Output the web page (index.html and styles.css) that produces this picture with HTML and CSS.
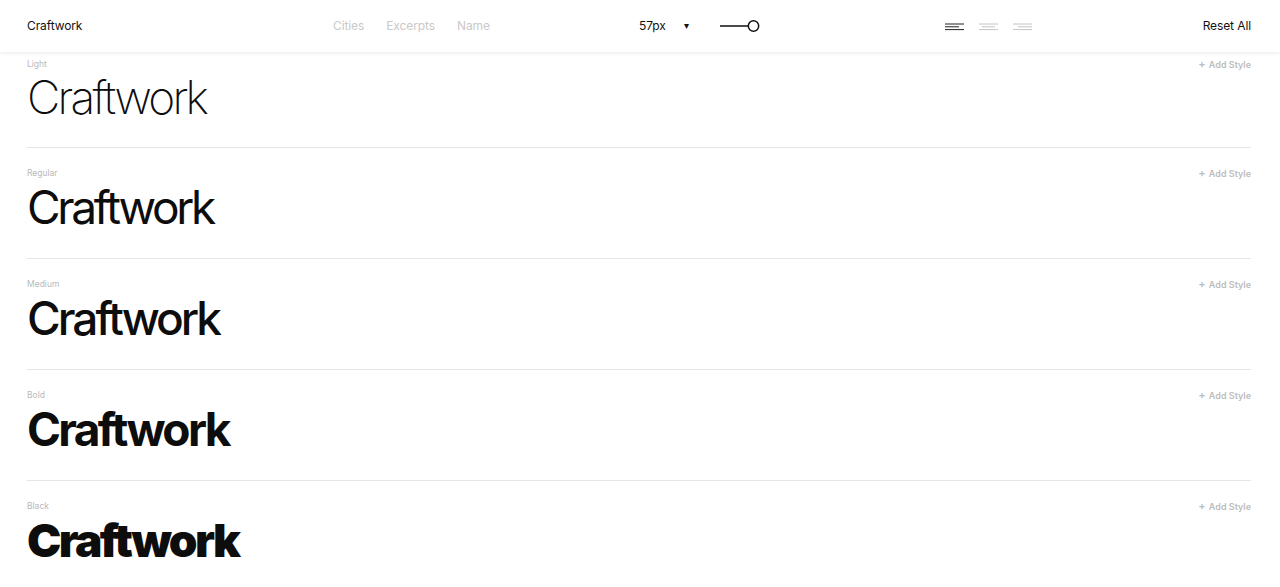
FILE: index.html
```html
<!DOCTYPE html>
<html lang="en">
<head>
  <meta charset="UTF-8" />
  <meta name="viewport" content="width=device-width, initial-scale=1.0"/>
  <title>Craftwork</title>
  <link rel="stylesheet" href="styles.css">
</head>
<body>

<header class="toolbar">
  <div class="brand">Craftwork</div>

  <nav class="samples">
    <a href="#">Cities</a>
    <a href="#">Excerpts</a>
    <a href="#">Name</a>
  </nav>

  <div class="size">
    <span class="size-value">57px</span>
    <span class="caret">&#9662;</span>
  </div>

  <div class="slider">
    <svg width="42" height="14" viewBox="0 0 42 14">
      <line x1="1" y1="7" x2="29" y2="7" stroke="#111" stroke-width="1.5"/>
      <circle cx="34.5" cy="7" r="5.2" fill="#fff" stroke="#111" stroke-width="1.5"/>
    </svg>
  </div>

  <div class="align">
    <svg width="19" height="8" viewBox="0 0 19 8">
      <g stroke="#222" stroke-width="1">
        <line x1="0" y1="1" x2="19" y2="1"/>
        <line x1="0" y1="3.8" x2="14" y2="3.8"/>
        <line x1="0" y1="6.6" x2="19" y2="6.6"/>
      </g>
    </svg>
    <svg width="19" height="8" viewBox="0 0 19 8">
      <g stroke="#c4c4c4" stroke-width="1">
        <line x1="0" y1="1" x2="19" y2="1"/>
        <line x1="3" y1="3.8" x2="16" y2="3.8"/>
        <line x1="0" y1="6.6" x2="19" y2="6.6"/>
      </g>
    </svg>
    <svg width="19" height="8" viewBox="0 0 19 8">
      <g stroke="#c4c4c4" stroke-width="1">
        <line x1="0" y1="1" x2="19" y2="1"/>
        <line x1="5" y1="3.8" x2="19" y2="3.8"/>
        <line x1="0" y1="6.6" x2="19" y2="6.6"/>
      </g>
    </svg>
  </div>

  <a class="reset" href="#">Reset All</a>
</header>

<main class="styles">
  <section class="style-row">
    <div class="row-head">
      <span class="label">Light</span>
      <a class="add" href="#"><span class="plus">+</span> Add Style</a>
    </div>
    <div class="sample w-light">Craftwork</div>
  </section>

  <section class="style-row">
    <div class="row-head">
      <span class="label">Regular</span>
      <a class="add" href="#"><span class="plus">+</span> Add Style</a>
    </div>
    <div class="sample w-regular">Craftwork</div>
  </section>

  <section class="style-row">
    <div class="row-head">
      <span class="label">Medium</span>
      <a class="add" href="#"><span class="plus">+</span> Add Style</a>
    </div>
    <div class="sample w-medium">Craftwork</div>
  </section>

  <section class="style-row">
    <div class="row-head">
      <span class="label">Bold</span>
      <a class="add" href="#"><span class="plus">+</span> Add Style</a>
    </div>
    <div class="sample w-bold">Craftwork</div>
  </section>

  <section class="style-row">
    <div class="row-head">
      <span class="label">Black</span>
      <a class="add" href="#"><span class="plus">+</span> Add Style</a>
    </div>
    <div class="sample w-black">Craftwork</div>
  </section>
</main>

</body>
</html>
```

FILE: styles.css
```css
* {
  box-sizing: border-box;
}

body {
  margin: 0;
  padding: 0;
  background: #fff;
  color: #111;
  font-family: Inter, 'Liberation Sans', sans-serif;
  height: 100vh;
  overflow: hidden;
}

a {
  color: inherit;
  text-decoration: none;
}

.toolbar {
  position: relative;
  z-index: 2;
  height: 52px;
  display: flex;
  align-items: center;
  padding: 0 29px 2px 27px;
  background: #fff;
  box-shadow: 0 1px 4px rgba(0, 0, 0, 0.09);
  font-size: 12px;
  letter-spacing: -0.1px;
}

.brand {
  width: 306px;
  color: #111;
}

.samples {
  display: flex;
  gap: 22px;
  width: 306px;
}

.samples a {
  color: #c9c9c9;
}

.size {
  display: flex;
  align-items: center;
  width: 80px;
}

.size-value {
  width: 45px;
}

.caret {
  font-size: 10px;
}

.slider {
  display: flex;
  align-items: center;
  width: 226px;
  padding-top: 2px;
}

.slider svg {
  display: block;
}

.align {
  display: flex;
  gap: 15px;
  padding-top: 3px;
}

.align svg {
  display: block;
}

.reset {
  margin-left: auto;
  color: #111;
}

.styles {
  padding: 0 29px 0 27px;
}

.style-row {
  height: 111px;
  padding-top: 19px;
  border-bottom: 1px solid #e6e6e6;
}

.style-row:first-child {
  height: 96px;
  padding-top: 6px;
}

.style-row:first-child .sample {
  margin-top: 1px;
}

.row-head {
  display: flex;
  justify-content: space-between;
  align-items: center;
  height: 12px;
  font-size: 8.5px;
  line-height: 12px;
}

.label {
  color: #b9b9b9;
}

.add {
  color: #bdbdbd;
  font-size: 9px;
  font-weight: 600;
}

.plus {
  margin-right: 1px;
  font-size: 11px;
}

.sample {
  margin-top: 2px;
  font-size: 46px;
  line-height: 52px;
  color: #0d0d0d;
}

.w-light {
  font-weight: 250;
  letter-spacing: -2.8px;
}

.w-regular {
  font-weight: 400;
  letter-spacing: -3.3px;
}

.w-medium {
  font-weight: 500;
  letter-spacing: -3px;
}

.w-bold {
  font-weight: 700;
  letter-spacing: -2.7px;
}

.w-black {
  font-weight: 900;
  letter-spacing: -2.6px;
}
```
